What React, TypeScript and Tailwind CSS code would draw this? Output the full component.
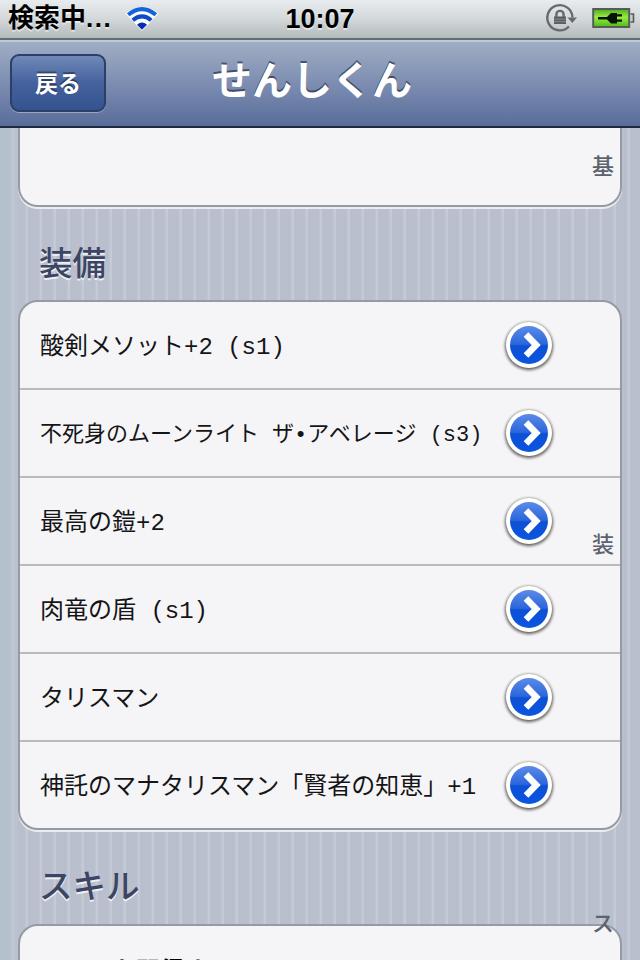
const items = [
  { name: "酸剣メソット+2 (s1)", size: "text-[24px]" },
  { name: "不死身のムーンライト ザ•アベレージ (s3)", size: "text-[22px]" },
  { name: "最高の鎧+2", size: "text-[24px]" },
  { name: "肉竜の盾 (s1)", size: "text-[24px]" },
  { name: "タリスマン", size: "text-[24px]" },
  { name: "神託のマナタリスマン「賢者の知恵」+1", size: "text-[24px]" },
];

function Wifi() {
  return (
    <svg width="34" height="26" viewBox="0 0 34 26" className="ml-[13px] mt-[6px] shrink-0">
      <path d="M17 25 L0.500 7.500 Q17 -5.500 33.500 7.500 Z" fill="#fff" opacity=".9" />
      <g fill="none" stroke="#1463dc" strokeWidth="4">
        <path d="M3.200 8.800 Q17 -2.500 30.800 8.800" />
        <path d="M7.800 14.200 Q17 6.500 26.200 14.200" stroke="#0d49c8" />
      </g>
      <path d="M12 18.800 Q17 14.300 22 18.800 L17 23.800 Z" fill="#0a2cb4" />
    </svg>
  );
}

function RotationLock() {
  return (
    <svg width="34" height="32" viewBox="0 0 34 32" className="mt-[2px]">
      <g fill="none" stroke="#666a6c" strokeWidth="2.4">
        <path d="M25 24.500 A12.600 12.600 0 1 1 28.500 15.500" />
        <path d="M12.400 15 V12.500 a3.600 3.600 0 0 1 7.200 0 V15" />
      </g>
      <path d="M23.500 15.500 h9.500 l-4.700 5.500z" fill="#666a6c" />
      <path d="M10 14.500 h12 v7.500 h-12z" fill="#5a5e60" />
      <path d="M10 17.200 h12 M10 19.700 h12" stroke="#85898b" strokeWidth="1" />
    </svg>
  );
}

function Battery() {
  return (
    <svg width="44" height="24" viewBox="0 0 44 24" className="ml-[14px] mt-[6px]">
      <defs>
        <linearGradient id="charge" x1="0" y1="0" x2="0" y2="1">
          <stop offset="0" stopColor="#4faa18" />
          <stop offset=".45" stopColor="#9bea45" />
          <stop offset="1" stopColor="#4dbd10" />
        </linearGradient>
      </defs>
      <rect x="1.200" y="3" width="36" height="18" fill="url(#charge)" stroke="#555d5b" strokeWidth="2" />
      <path d="M38.500 8 h3 v8 h-3" fill="#c8cccd" stroke="#555d5b" strokeWidth="1.600" />
      <path d="M6 11 H15 L19 7 H25 V8.300 H30 V10.500 H25 V13.500 H30 V15.700 H25 V17.500 H19 L15 13.500 H6z" fill="#071307" />
    </svg>
  );
}

function Disclosure() {
  return (
    <svg width="56" height="58" viewBox="0 0 56 58" className="relative top-[1px] shrink-0">
      <defs>
        <linearGradient id="disc" x1="0" y1="0" x2="0" y2="1">
          <stop offset="0" stopColor="#5c8be8" />
          <stop offset=".48" stopColor="#2c66dc" />
          <stop offset=".52" stopColor="#0d50d6" />
          <stop offset="1" stopColor="#0a55e0" />
        </linearGradient>
        <filter id="soft" x="-20%" y="-20%" width="140%" height="140%">
          <feGaussianBlur stdDeviation="1.800" />
        </filter>
      </defs>
      <circle cx="28" cy="29.200" r="24" fill="#000" opacity=".6" filter="url(#soft)" />
      <circle cx="28" cy="28" r="23" fill="#fff" />
      <circle cx="28" cy="28" r="19" fill="url(#disc)" />
      <path d="M25 17.500 L35.200 28 L25 38.500" fill="none" stroke="#fff" strokeWidth="6.500" />
    </svg>
  );
}

const heading =
  "pl-[39px] text-[33.5px] font-medium leading-[40px] text-[#3c4563] [text-shadow:0_2px_0_rgba(255,255,255,0.75)]";
const card = "mx-[18px] border-2 border-[#969ba3] bg-[#f5f5f7]";

export default function App() {
  return (
    <div className="relative flex h-[960px] w-[640px] flex-col overflow-hidden bg-[#b9bfcd] font-['Liberation_Sans','Noto_Sans_CJK_JP',sans-serif]">
      <header className="flex h-[40px] shrink-0 items-start border-b-2 border-[#606d74] bg-linear-to-b from-[#e8ecef] via-[#d3d8da] to-[#b4bbbc] text-black">
        <div className="flex w-[250px] pl-[8px]">
          <span className="whitespace-nowrap text-[26px] font-bold leading-[37px] [text-shadow:0_2px_0_rgba(255,255,255,0.5)]">
            検索中<span className="tracking-[1.5px]">...</span>
          </span>
          <Wifi />
        </div>
        <div className="w-[140px] text-center text-[27px] font-bold leading-[38px] [text-shadow:0_2px_0_rgba(255,255,255,0.5)]">10:07</div>
        <div className="flex flex-1 justify-end pr-[4px]">
          <RotationLock />
          <Battery />
        </div>
      </header>

      <nav className="flex h-[88px] shrink-0 border-t-2 border-b-2 border-t-[#bccadc] border-b-[#1d2a40] bg-linear-to-b from-[#a0adc4] via-[#7c8db1] to-[#596d9a] pl-[10px] pt-[12px]">
        <button className="h-[58px] w-[96px] rounded-[9px] border-2 border-[#2b4068] bg-linear-to-b from-[#7089b8] via-[#45629f] to-[#34538e] text-[23px] font-bold leading-[56px] text-white shadow-[0_1px_0_rgba(255,255,255,0.35)] [text-shadow:0_-2px_0_rgba(0,0,0,0.4)]">
          戻る
        </button>
        <h1 className="w-[412px] text-center text-[40px] font-bold leading-[54px] text-white [text-shadow:0_-2px_0_rgba(30,40,60,0.65)]">せんしくん</h1>
      </nav>

      <main className="flex flex-1 flex-col overflow-hidden bg-[linear-gradient(90deg,#b4c0cb_0px,#b4c0cb_10px,#c0c8d4_12px,#b9c1ce_18px,transparent_18px),repeating-linear-gradient(90deg,#b9bfcd_0px,#b9bfcd_11px,#c4cbd7_12px,#c4cbd7_14px)]">
        <section className={`${card} h-[79px] shrink-0 rounded-b-[20px] border-t-0 shadow-[0_2px_0_#e9ecf1]`} />
        <h2 className={`${heading} mt-[37px]`}>装備</h2>
        <section className={`${card} mt-[16px] flex h-[530px] shrink-0 flex-col rounded-[20px] shadow-[0_2px_0_#e9ecf1]`}>
          {items.map((item) => (
            <div key={item.name} className="flex h-[88px] items-center border-b-2 border-[#b9b9bf] last:h-[86px] last:border-b-0">
              <div className={`${item.size} w-[481px] whitespace-pre pl-[20px] pt-[5px] font-['Liberation_Mono','Noto_Sans_CJK_JP',monospace] text-[#151518]`}>
                {item.name}
              </div>
              <Disclosure />
            </div>
          ))}
        </section>
        <h2 className={`${heading} mt-[37px]`}>スキル</h2>
        <section className={`${card} mt-[17px] h-[90px] shrink-0 rounded-t-[20px]`}>
          <p className="pl-[20px] pt-[27px] text-[24px] font-bold leading-[36px] text-black">スキルを習得する</p>
        </section>
      </main>

      <aside className="absolute right-[26px] top-[128px] h-[832px] w-[22px] text-[22px] font-medium leading-[30px] text-[#5c626e]">
        <div className="pt-[24px]">基</div>
        <div className="pt-[348px]">装</div>
        <div className="pt-[349px]">ス</div>
      </aside>
    </div>
  );
}
